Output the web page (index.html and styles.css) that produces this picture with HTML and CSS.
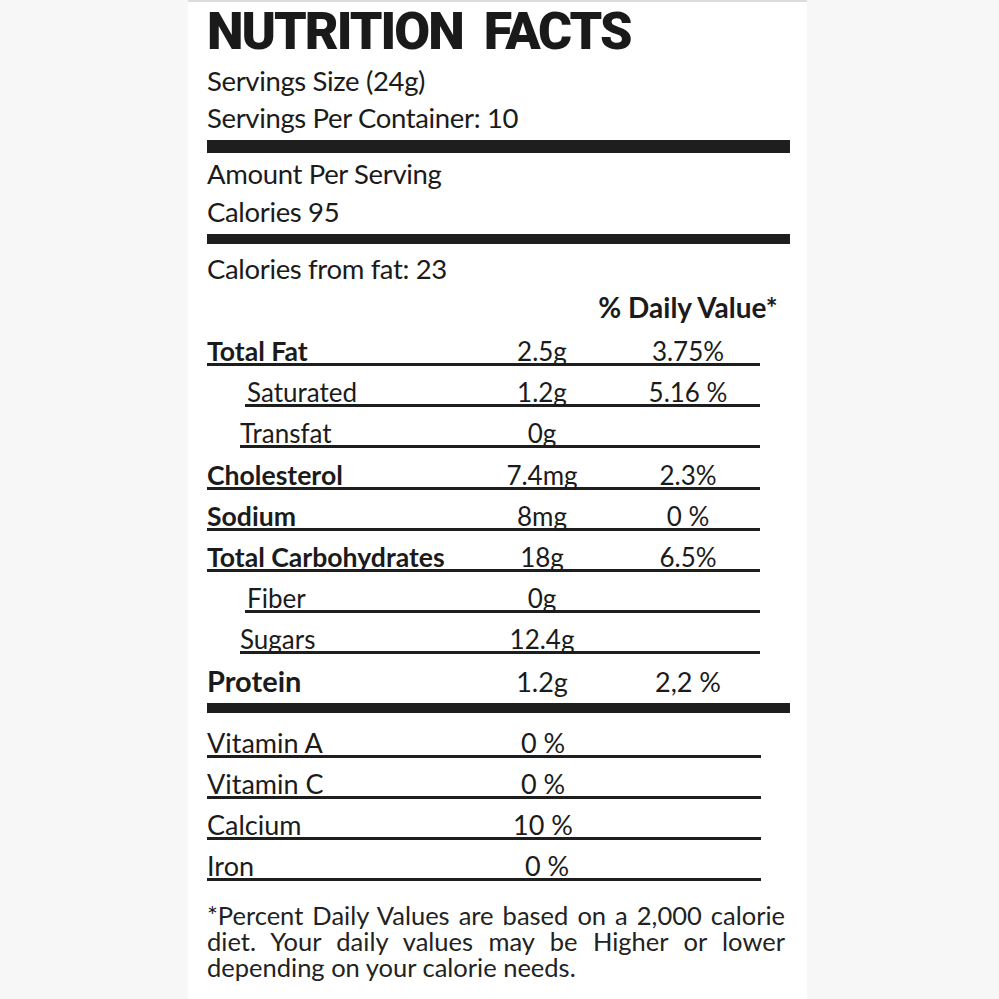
FILE: index.html
```html
<!DOCTYPE html>
<html lang="en">
<head>
<meta charset="utf-8">
<title>Nutrition Facts</title>
<link rel="stylesheet" href="styles.css">
</head>
<body>
<main class="panel">
  <h1 class="title">NUTRITION FACTS</h1>
  <p class="line">Servings Size (24g)</p>
  <p class="line">Servings Per Container: 10</p>
  <div class="bar bar-lg"></div>
  <p class="line line-amount">Amount Per Serving</p>
  <p class="line">Calories 95</p>
  <div class="bar bar-md"></div>
  <p class="line line-fat">Calories from fat: 23</p>
  <div class="dv-head"><span class="dv-label">% Daily Value*</span></div>

  <div class="rows">
    <div class="row bold"><span class="name">Total Fat</span><span class="amt">2.5g</span><span class="pct">3.75%</span></div>
    <div class="row ind1"><span class="name">Saturated</span><span class="amt">1.2g</span><span class="pct">5.16 %</span></div>
    <div class="row ind2"><span class="name">Transfat</span><span class="amt">0g</span><span class="pct"></span></div>
    <div class="row bold"><span class="name">Cholesterol</span><span class="amt">7.4mg</span><span class="pct">2.3%</span></div>
    <div class="row bold"><span class="name">Sodium</span><span class="amt">8mg</span><span class="pct">0 %</span></div>
    <div class="row bold"><span class="name">Total Carbohydrates</span><span class="amt">18g</span><span class="pct">6.5%</span></div>
    <div class="row ind1"><span class="name">Fiber</span><span class="amt">0g</span><span class="pct"></span></div>
    <div class="row ind2"><span class="name">Sugars</span><span class="amt">12.4g</span><span class="pct"></span></div>
    <div class="row protein"><span class="name">Protein</span><span class="amt">1.2g</span><span class="pct">2,2 %</span></div>
  </div>

  <div class="bar bar-md bar-protein"></div>

  <div class="rows vitamins">
    <div class="row vit"><span class="name">Vitamin A</span><span class="amt">0 %</span><span class="pct"></span></div>
    <div class="row vit"><span class="name">Vitamin C</span><span class="amt">0 %</span><span class="pct"></span></div>
    <div class="row vit"><span class="name">Calcium</span><span class="amt">10 %</span><span class="pct"></span></div>
    <div class="row vit"><span class="name">Iron</span><span class="amt amt-iron">0 %</span><span class="pct"></span></div>
  </div>

  <div class="note">
    <p class="note-line justify">*Percent Daily Values are based on a 2,000 calorie</p>
    <p class="note-line justify">diet. Your daily values may be Higher or lower</p>
    <p class="note-line">depending on your calorie needs.</p>
  </div>
</main>
</body>
</html>
```

FILE: styles.css
```css
* {
  box-sizing: border-box;
}

html, body {
  margin: 0;
  padding: 0;
}

body {
  background: #f7f7f7;
  font-family: Lato, "Open Sans", sans-serif;
  color: #1b1b1b;
}

.panel {
  display: block;
  width: 619px;
  min-height: 999px;
  margin: 0 0 0 188px;
  padding: 0 17px 0 19px;
  background: #ffffff;
  border-top: 2px solid #dcdcdc;
}

.title {
  margin: 0;
  font-family: Roboto, "Liberation Sans", sans-serif;
  font-weight: 900;
  font-size: 52px;
  line-height: 60px;
  letter-spacing: -2px;
  word-spacing: 10px;
  color: #1a1a1a;
  white-space: nowrap;
}

.line {
  margin: 0;
  font-size: 27.5px;
  line-height: 37px;
  letter-spacing: -0.35px;
  white-space: nowrap;
}

.line-amount {
  margin-top: 2px;
  line-height: 38px;
}

.line-amount + .line {
  line-height: 38px;
}

.line-fat {
  margin-top: 6px;
  line-height: 38px;
}

.bar {
  background: #1e1e1e;
}

.bar-lg {
  height: 13px;
  margin-top: 4px;
}

.bar-md {
  height: 10px;
  margin-top: 3px;
}

.bar-protein {
  margin-top: 6px;
}

.dv-head {
  display: grid;
  grid-template-columns: 1fr 148px 144px;
  margin: 2px 30px 0 0;
  font-size: 28px;
  font-weight: 700;
  line-height: 35px;
}

.dv-label {
  grid-column: 3;
  justify-self: center;
  white-space: nowrap;
}

.row {
  display: grid;
  grid-template-columns: 1fr 148px 144px;
  align-items: baseline;
  margin-right: 30px;
  padding-top: 14.15px;
  font-size: 26px;
  line-height: 24px;
  border-bottom: 3px solid #1e1e1e;
  white-space: nowrap;
}

.row .amt,
.row .pct {
  text-align: center;
}

.row.bold .name {
  font-weight: 700;
  font-size: 26.6px;
}

.row.ind1 {
  margin-left: 38px;
}

.row.ind1 .name {
  padding-left: 2px;
}

.row.ind2 {
  margin-left: 33px;
}

.row.protein {
  border-bottom: none;
  padding-top: 11.8px;
  line-height: 30px;
  font-size: 27px;
}

.row.protein .name {
  font-size: 29px;
  font-weight: 700;
}

.vitamins {
  margin-top: 4px;
}

.row.vit {
  margin-right: 29px;
  font-size: 27px;
}

.amt-iron {
  padding-left: 8px;
}

.note {
  margin: 20.5px 5px 0 0;
  color: #222;
}

.note-line {
  margin: 0;
  font-size: 25.5px;
  line-height: 26px;
  white-space: nowrap;
}

.note-line.justify {
  white-space: normal;
  text-align: justify;
  text-align-last: justify;
}
```
